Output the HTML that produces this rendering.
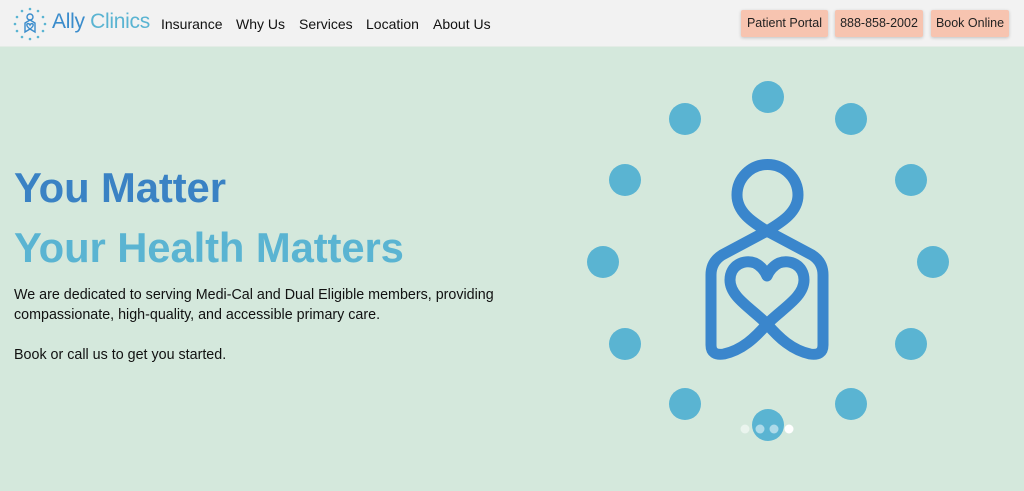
<!DOCTYPE html>
<html><head><meta charset="utf-8"><style>
*{margin:0;padding:0;box-sizing:border-box}
body{width:1024px;height:491px;overflow:hidden;background:#d4e8dc;font-family:"Liberation Sans",Arial,sans-serif;position:relative}
.hdr{position:absolute;left:0;top:0;width:1024px;height:47px;background:#f2f2f2;border-bottom:1px solid #e4ece6}
.logo{position:absolute;left:13px;top:7px}
.brand{position:absolute;left:52px;top:10px;font-size:21px;color:#5ab4d2;letter-spacing:-0.3px}
.brand b{font-weight:normal;color:#3a8ccc}
.nav{position:absolute;top:16px;font-size:14px;color:#111}
.btn{position:absolute;top:10px;height:27px;background:#f7c4b0;border-radius:2px;box-shadow:0 1px 3px rgba(0,0,0,.2);font-size:12.5px;color:#222;line-height:27px;text-align:center}
h1{position:absolute;left:14px;font-size:41.8px;font-weight:bold;letter-spacing:-0.1px}
.p{position:absolute;left:14px;font-size:14.3px;color:#111;line-height:20px}
</style></head><body>
<div class="hdr">
<svg class="logo" width="34" height="34" viewBox="0 0 34 34">
<g fill="#5ab4d2"><circle cx="17" cy="2" r="1.3"/><circle cx="9" cy="4" r="1.3"/><circle cx="25" cy="4" r="1.3"/><circle cx="4" cy="10" r="1.3"/><circle cx="30" cy="10" r="1.3"/><circle cx="2" cy="17" r="1.3"/><circle cx="32" cy="17" r="1.3"/><circle cx="4" cy="24" r="1.3"/><circle cx="30" cy="24" r="1.3"/><circle cx="9" cy="30" r="1.3"/><circle cx="25" cy="30" r="1.3"/><circle cx="17" cy="32" r="1.3"/></g>
<g fill="none" stroke="#3a8ccc" stroke-width="1.4"><circle cx="17" cy="10" r="3"/><path d="M17 13 L12 16 L12 25 L17 22 L22 25 L22 16 Z"/><path d="M17 22 Q13 19 14 17 Q16 16 17 18 Q18 16 20 17 Q21 19 17 22"/></g>
</svg>
<div class="brand"><b>Ally</b> Clinics</div>
<div class="nav" style="left:161px">Insurance</div>
<div class="nav" style="left:236px">Why Us</div>
<div class="nav" style="left:299px">Services</div>
<div class="nav" style="left:366px">Location</div>
<div class="nav" style="left:433px">About Us</div>
<div class="btn" style="left:741px;width:87px">Patient Portal</div>
<div class="btn" style="left:835px;width:88px">888-858-2002</div>
<div class="btn" style="left:931px;width:78px">Book Online</div>
</div>
<h1 style="top:164px;color:#3a82c4">You Matter</h1>
<h1 style="top:224px;color:#5ab4d2">Your Health Matters</h1>
<div class="p" style="top:285px">We are dedicated to serving Medi-Cal and Dual Eligible members, providing<br>compassionate, high-quality, and accessible primary care.</div>
<div class="p" style="top:345px">Book or call us to get you started.</div>
<svg style="position:absolute;left:0;top:0" width="1024" height="491">
<g fill="#5ab4d2">
<circle cx="768" cy="97" r="16"/><circle cx="685" cy="119" r="16"/><circle cx="851" cy="119" r="16"/>
<circle cx="625" cy="180" r="16"/><circle cx="911" cy="180" r="16"/>
<circle cx="603" cy="262" r="16"/><circle cx="933" cy="262" r="16"/>
<circle cx="625" cy="344" r="16"/><circle cx="911" cy="344" r="16"/>
<circle cx="685" cy="404" r="16"/><circle cx="851" cy="404" r="16"/>
<circle cx="768" cy="425" r="16"/></g>
<g fill="none" stroke="#3a86cc" stroke-width="11" stroke-linecap="round" stroke-linejoin="round">
<path d="M767 231 C752 222 737 212 737 195 A30.5 30.5 0 1 1 798 195 C798 212 782 222 767 231"/>
<path d="M767 231 L722 255 Q711 262 711 275 L711 345 Q711 356 724 354 C742 350 755 338 767 324 C783 308 804 297 804 280 C804 265 790 259 779 263 Q771 267 767 276 Q763 267 755 263 C744 259 730 265 730 280 C730 297 751 308 767 324 C779 338 792 350 810 354 Q823 356 823 345 L823 275 Q823 262 812 255 L767 231"/>
</g>
<g fill="#fff"><circle cx="745" cy="429" r="4.5" opacity=".5"/><circle cx="760" cy="429" r="4.5" opacity=".5"/><circle cx="774" cy="429" r="4.5" opacity=".5"/><circle cx="789" cy="429" r="4.5"/></g>
</svg>
</body></html>
